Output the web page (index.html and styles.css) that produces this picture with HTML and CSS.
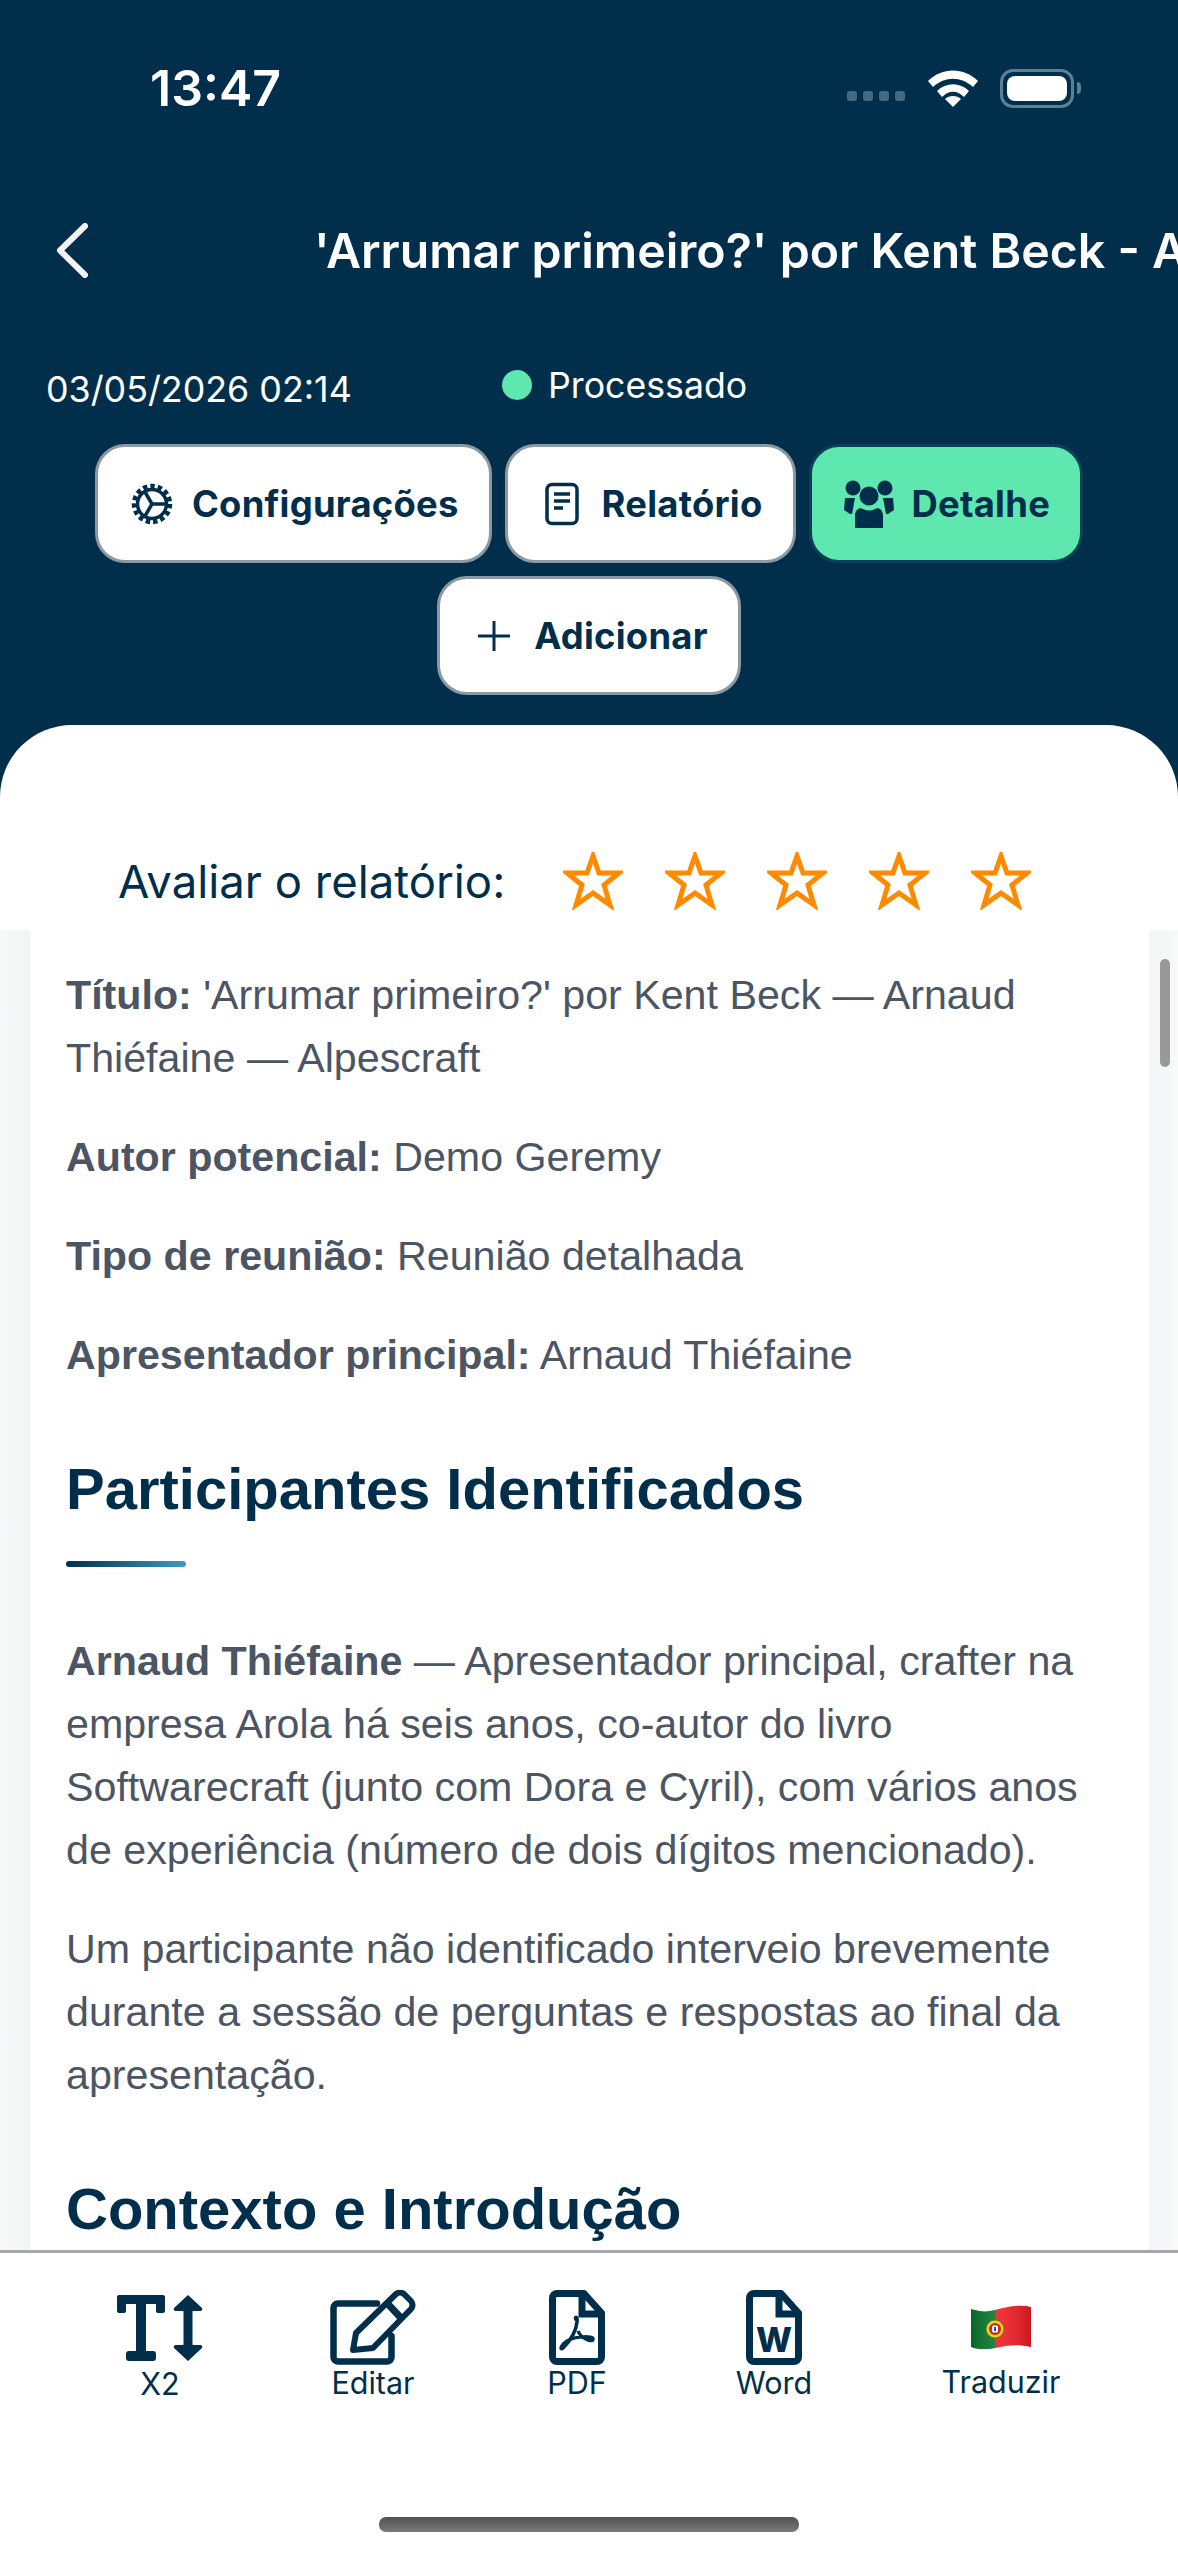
FILE: index.html
```html
<!DOCTYPE html>
<html lang="pt">
<head>
    <meta charset="UTF-8">
    <meta name="viewport" content="width=device-width, initial-scale=1.0">
    <link rel="stylesheet" href="styles.css">
    <title>Relatório</title>
</head>
<body>

    <header class="header">
        <div class="status-bar">
            <span class="clock">13:47</span>
            <div class="status-icons">
                <div class="signal"><i></i><i></i><i></i><i></i></div>
                <svg class="wifi" width="50" height="37" viewBox="0 0 50 37">
                    <path d="M0 11 C14 -3 36 -3 50 11 L45 17 C33 6 17 6 5 17Z M9 21 C18 12 32 12 41 21 L36 27 C29 20 21 20 14 27Z M17 29 C21 25 29 25 33 29 L25 37Z" fill="#fff"/>
                </svg>
                <div class="battery"><div class="battery-level"></div></div>
                <div class="battery-cap"></div>
            </div>
        </div>

        <div class="title-row">
            <svg class="back" width="32" height="55" viewBox="0 0 32 55">
                <path d="M29 3 L4 27.5 L29 52" fill="none" stroke="#f2f2f2" stroke-width="6" stroke-linecap="round" stroke-linejoin="round"/>
            </svg>
            <h1 class="title">'Arrumar primeiro?' por Kent Beck - Arnaud Thiéfaine - Alpescraft</h1>
        </div>

        <div class="meta-row">
            <span class="date">03/05/2026 02:14</span>
            <span class="state"><i class="dot"></i>Processado</span>
        </div>

        <div class="tabs">
            <button class="tab">
                <svg class="tab-icon" width="48" height="48" viewBox="0 0 48 48">
                    <circle cx="24" cy="24" r="17.5" fill="none" stroke="#012f4b" stroke-width="5.5" stroke-dasharray="4.3 3"/>
                    <circle cx="24" cy="24" r="14.5" fill="none" stroke="#012f4b" stroke-width="3.5"/>
                    <path d="M24 24 L38 24 M24 24 L17 12 M24 24 L17 36" stroke="#012f4b" stroke-width="3.5"/>
                </svg>
                Configurações
            </button>
            <button class="tab">
                <svg class="tab-icon" width="48" height="48" viewBox="0 0 48 48">
                    <rect x="9" y="4.5" width="30" height="39" rx="5" fill="none" stroke="#012f4b" stroke-width="3.5"/>
                    <path d="M16 14 H32 M16 21 H32 M16 28 H25" stroke="#012f4b" stroke-width="3.5"/>
                </svg>
                Relatório
            </button>
            <button class="tab tab-active">
                <svg class="tab-icon-wide" width="54" height="48" viewBox="0 0 54 48">
                    <circle cx="11" cy="8" r="7.5" fill="#012f4b"/>
                    <circle cx="43" cy="8" r="7.5" fill="#012f4b"/>
                    <path d="M3 18 H13 L10 34 H8 L2 30Z M51 18 H41 L44 34 H46 L52 30Z" fill="#012f4b"/>
                    <circle cx="27" cy="16" r="9.5" fill="#012f4b"/>
                    <path d="M13 48 V36 C13 29 18 27 21 29 C25 31 29 31 33 29 C36 27 41 29 41 36 V48Z" fill="#012f4b"/>
                </svg>
                Detalhe
            </button>
            <button class="tab">
                <svg class="tab-icon" width="48" height="48" viewBox="0 0 48 48">
                    <path d="M24 9 V39 M8 24 H40" stroke="#012f4b" stroke-width="3"/>
                </svg>
                Adicionar
            </button>
        </div>
    </header>

    <main class="sheet">
        <div class="rating">
            <span class="rating-label">Avaliar o relatório:</span>
            <div class="stars">
                <svg class="star" width="60" height="58" viewBox="0 0 60 58"><path d="M30 4 L36 21 L56 21 L41 33 L47 53 L30 41 L13 53 L19 33 L4 21 L24 21Z" fill="none" stroke="#ff8a00" stroke-width="5"/></svg>
                <svg class="star" width="60" height="58" viewBox="0 0 60 58"><path d="M30 4 L36 21 L56 21 L41 33 L47 53 L30 41 L13 53 L19 33 L4 21 L24 21Z" fill="none" stroke="#ff8a00" stroke-width="5"/></svg>
                <svg class="star" width="60" height="58" viewBox="0 0 60 58"><path d="M30 4 L36 21 L56 21 L41 33 L47 53 L30 41 L13 53 L19 33 L4 21 L24 21Z" fill="none" stroke="#ff8a00" stroke-width="5"/></svg>
                <svg class="star" width="60" height="58" viewBox="0 0 60 58"><path d="M30 4 L36 21 L56 21 L41 33 L47 53 L30 41 L13 53 L19 33 L4 21 L24 21Z" fill="none" stroke="#ff8a00" stroke-width="5"/></svg>
                <svg class="star" width="60" height="58" viewBox="0 0 60 58"><path d="M30 4 L36 21 L56 21 L41 33 L47 53 L30 41 L13 53 L19 33 L4 21 L24 21Z" fill="none" stroke="#ff8a00" stroke-width="5"/></svg>
            </div>
        </div>

        <div class="report">
            <article class="report-card">
                <p><strong>Título:</strong> 'Arrumar primeiro?' por Kent Beck — Arnaud Thiéfaine — Alpescraft</p>
                <p><strong>Autor potencial:</strong> Demo Geremy</p>
                <p><strong>Tipo de reunião:</strong> Reunião detalhada</p>
                <p><strong>Apresentador principal:</strong> Arnaud Thiéfaine</p>

                <h2>Participantes Identificados</h2>
                <p><strong>Arnaud Thiéfaine</strong> — Apresentador principal, crafter na empresa Arola há seis anos, co-autor do livro Softwarecraft (junto com Dora e Cyril), com vários anos de experiência (número de dois dígitos mencionado).</p>
                <p>Um participante não identificado interveio brevemente durante a sessão de perguntas e respostas ao final da apresentação.</p>

                <h2>Contexto e Introdução</h2>
            </article>
            <div class="scroll-thumb"></div>
        </div>
    </main>

    <footer class="toolbar">
        <div class="tools">
            <div class="tool tool-x2">
                <svg width="86" height="66" viewBox="0 0 86 66">
                    <path d="M2 0 H46 a2 2 0 0 1 2 2 V16 a2 2 0 0 1 -2 2 H41 a2 2 0 0 1 -2 -2 V9 H29 V56 H36 a3 3 0 0 1 3 3 V63 a3 3 0 0 1 -3 3 H12 a3 3 0 0 1 -3 -3 V59 a3 3 0 0 1 3 -3 H19 V9 H9 V16 a2 2 0 0 1 -2 2 H2 a2 2 0 0 1 -2 -2 V2 a2 2 0 0 1 2 -2Z" fill="#012f4b"/>
                    <path d="M71 0 L85 13 Q86 16 83 16 H75.500 V50 H83 Q86 50 85 53 L71 66 L57 53 Q56 50 59 50 H66.500 V16 H59 Q56 16 57 13Z" fill="#012f4b"/>
                </svg>
                <span>X2</span>
            </div>
            <div class="tool tool-edit">
                <svg width="86" height="76" viewBox="0 0 86 76">
                    <path d="M47 13.500 H8 a4.500 4.500 0 0 0 -4.500 4.500 V67 a4.500 4.500 0 0 0 4.500 4.500 H57 a4.500 4.500 0 0 0 4.500 -4.500 V46" fill="none" stroke="#012f4b" stroke-width="6.500" stroke-linecap="round"/>
                    <path d="M26 43 L66 4 Q70 1 74 4 L81 11 Q84 15 81 19 L43 58 L23 60Z" fill="none" stroke="#012f4b" stroke-width="6" stroke-linejoin="round"/>
                    <path d="M57 13 L71 28" stroke="#012f4b" stroke-width="7"/>
                </svg>
                <span>Editar</span>
            </div>
            <div class="tool tool-pdf">
                <svg width="56" height="75" viewBox="0 0 56 75">
                    <path d="M8 3.500 H35 L52.500 23 V67 a4.500 4.500 0 0 1 -4.500 4.500 H8 a4.500 4.500 0 0 1 -4.500 -4.500 V8 a4.500 4.500 0 0 1 4.500 -4.500Z" fill="none" stroke="#012f4b" stroke-width="7" stroke-linejoin="round"/>
                    <path d="M33 4 V24 H52" fill="none" stroke="#012f4b" stroke-width="7"/>
                    <path d="M27 30 C25 26 29 26 28 32 C27 42 20 52 14 58 C10 61 12 54 20 50 C28 46 44 46 44 49 C44 53 32 49 29 41" fill="none" stroke="#012f4b" stroke-width="3.500"/>
                </svg>
                <span>PDF</span>
            </div>
            <div class="tool tool-word">
                <svg width="56" height="75" viewBox="0 0 56 75">
                    <path d="M8 3.500 H35 L52.500 23 V67 a4.500 4.500 0 0 1 -4.500 4.500 H8 a4.500 4.500 0 0 1 -4.500 -4.500 V8 a4.500 4.500 0 0 1 4.500 -4.500Z" fill="none" stroke="#012f4b" stroke-width="7" stroke-linejoin="round"/>
                    <path d="M33 4 V24 H52" fill="none" stroke="#012f4b" stroke-width="7"/>
                    <text x="28" y="62" text-anchor="middle" class="word-letter">W</text>
                </svg>
                <span>Word</span>
            </div>
            <div class="tool tool-lang">
                <svg width="60" height="44" viewBox="0 0 60 44">
                    <defs>
                        <clipPath id="wave"><path d="M0 4 C10 7 16 7 24 5 C36 2 48 -1 60 2 V42 C48 39 36 40 24 43 C16 45 8 45 0 42Z"/></clipPath>
                        <linearGradient id="shade" x1="0" y1="0" x2="1" y2="0">
                            <stop offset="0" stop-color="#000" stop-opacity=".18"/>
                            <stop offset=".5" stop-color="#fff" stop-opacity=".1"/>
                            <stop offset="1" stop-color="#000" stop-opacity=".16"/>
                        </linearGradient>
                    </defs>
                    <g clip-path="url(#wave)">
                        <rect width="24" height="46" fill="#0a7a2f"/>
                        <rect x="24" width="36" height="46" fill="#ee1c25"/>
                        <rect width="60" height="46" fill="url(#shade)"/>
                    </g>
                    <circle cx="24" cy="24" r="9" fill="#e8d61a" stroke="#6b7a10" stroke-width="1"/>
                    <circle cx="24" cy="24" r="6" fill="#d8202a"/>
                    <rect x="21" y="20.500" width="6" height="7" rx="1.500" fill="#fff"/>
                    <rect x="23" y="22" width="2" height="4" fill="#2b4aa0"/>
                </svg>
                <span>Traduzir</span>
            </div>
        </div>
        <div class="home-indicator"></div>
    </footer>

</body>
</html>
```

FILE: styles.css
```css
* {
    box-sizing: border-box;
}

html, body {
    margin: 0;
    padding: 0;
}

body {
    width: 1178px;
    height: 2556px;
    display: flex;
    flex-direction: column;
    overflow: hidden;
    background-color: #fff;
    color: #012f4b;
    font-family: 'Inter', sans-serif;
}

/* En-tete bleu */
.header {
    height: 726px;
    flex: none;
    background-color: #012f4b;
    color: #fff;
    padding-top: 60px;
}

.status-bar {
    height: 56px;
    display: flex;
    justify-content: space-between;
    align-items: center;
    padding: 0 97px 0 150px;
}

.clock {
    font-size: 50px;
    font-weight: 600;
}

.status-icons {
    display: flex;
    align-items: center;
}

.signal {
    display: flex;
    gap: 6px;
    margin: 16px 23px 0 0;
}

.signal i {
    width: 10px;
    height: 10px;
    border-radius: 3px;
    background-color: #456a80;
}

.battery {
    width: 74px;
    height: 39px;
    margin-left: 22px;
    padding: 4px;
    border: 3px solid #5f7f92;
    border-radius: 13px;
}

.battery-level {
    height: 100%;
    background-color: #fff;
    border-radius: 8px;
}

.battery-cap {
    width: 4px;
    height: 12px;
    margin-left: 3px;
    background-color: #5f7f92;
    border-radius: 0 6px 6px 0;
}

.title-row {
    height: 55px;
    margin-top: 107px;
    display: flex;
    align-items: center;
    padding-left: 56px;
    overflow: hidden;
}

.back {
    flex: none;
}

.title {
    margin: 0 0 0 226px;
    font-size: 48.2px;
    font-weight: 600;
    white-space: nowrap;
}

.meta-row {
    height: 50px;
    margin-top: 81px;
    display: flex;
    padding-left: 46px;
}

.date {
    width: 456px;
    font-size: 35.8px;
    line-height: 50px;
    margin-top: 5px;
}

.state {
    display: flex;
    align-items: center;
    gap: 16px;
    font-size: 35.7px;
    line-height: 50px;
    height: 40px;
    margin-top: 6px;
}

.dot {
    width: 30px;
    height: 30px;
    border-radius: 50%;
    background-color: #5ee8b0;
}

.tabs {
    width: 1020px;
    margin: 35px auto 0;
    display: flex;
    flex-wrap: wrap;
    justify-content: center;
    gap: 13px;
}

.tab {
    height: 119px;
    display: flex;
    align-items: center;
    gap: 16px;
    padding: 0 30px;
    border: 3px solid #8c98a3;
    border-radius: 30px;
    background-color: #fff;
    color: #012f4b;
    font-family: 'Inter', sans-serif;
    font-size: 36.4px;
    font-weight: 700;
    letter-spacing: 0.25px;
}

.tab-active {
    background-color: #5ee8b0;
    border-color: #0c3f58;
}

.tab-icon, .tab-icon-wide {
    flex: none;
}

/* Feuille blanche */
.sheet {
    flex: 1;
    min-height: 0;
    margin-top: -1px;
    display: flex;
    flex-direction: column;
    background-color: #012f4b;
}

.rating {
    height: 205px;
    flex: none;
    display: flex;
    align-items: flex-end;
    padding: 0 0 20px 118px;
    background-color: #fff;
    border-radius: 72px 72px 0 0;
}

.rating-label {
    font-size: 45.5px;
    line-height: 56px;
    width: 445px;
}

.stars {
    display: flex;
    gap: 42px;
}

.report {
    flex: 1;
    min-height: 0;
    position: relative;
    padding: 0 29px 0 30px;
    overflow: hidden;
    background: linear-gradient(90deg, #f8f9f9, #f3f4f6 30px, #f3f4f6 1148px, #f8f9f9);
}

.report-card {
    height: 100%;
    padding: 34px 24px 0 36px;
    background-color: #fff;
    font-family: 'Liberation Sans', Arial, sans-serif;
    font-size: 41.2px;
    line-height: 63px;
    color: #4b5563;
}

.report-card p {
    margin: 0 0 36px;
}

.report-card strong {
    font-weight: 700;
}

.report-card h2 {
    position: relative;
    margin: 66px 0 105px;
    font-family: 'Liberation Sans', Arial, sans-serif;
    font-size: 58px;
    font-weight: 700;
    line-height: 72px;
    color: #012f4b;
}

.report-card h2::after {
    content: "";
    position: absolute;
    left: 0;
    bottom: -42px;
    width: 120px;
    height: 6px;
    border-radius: 3px;
    background: linear-gradient(90deg, #012f4b, #3d9cc2);
}

.scroll-thumb {
    position: absolute;
    top: 29px;
    right: 8px;
    width: 10px;
    height: 108px;
    border-radius: 5px;
    background-color: #999;
}

/* Barre du bas */
.toolbar {
    height: 306px;
    flex: none;
    display: flex;
    flex-direction: column;
    border-top: 3px solid #a8a8a8;
    background-color: #fff;
}

.tools {
    height: 253px;
    display: flex;
    align-items: flex-start;
    padding-left: 100px;
}

.tool {
    width: 120px;
    flex: none;
    display: flex;
    flex-direction: column;
    align-items: center;
    padding-top: 37px;
    font-size: 30.5px;
    line-height: 36px;
}

.tool svg {
    flex: none;
}

.tool span {
    margin-top: 0;
}

.tool-x2 {
    padding-top: 42px;
}

.tool-x2 span {
    margin-top: 5px;
}

.tool-edit {
    margin-left: 93px;
}

.tool-edit span {
    margin-top: -1px;
}

.tool-pdf {
    margin-left: 84px;
}

.tool-word {
    margin-left: 77px;
}

.tool-lang {
    margin-left: 107px;
    padding-top: 52px;
}

.tool-lang span {
    margin-top: 15px;
}

.word-letter {
    font-family: 'Inter', sans-serif;
    font-size: 34px;
    font-weight: 800;
    fill: #012f4b;
}

.home-indicator {
    width: 420px;
    height: 15px;
    margin: 11px auto 0;
    border-radius: 7px;
    background: linear-gradient(180deg, #505050, #7a7a7a);
}
```
